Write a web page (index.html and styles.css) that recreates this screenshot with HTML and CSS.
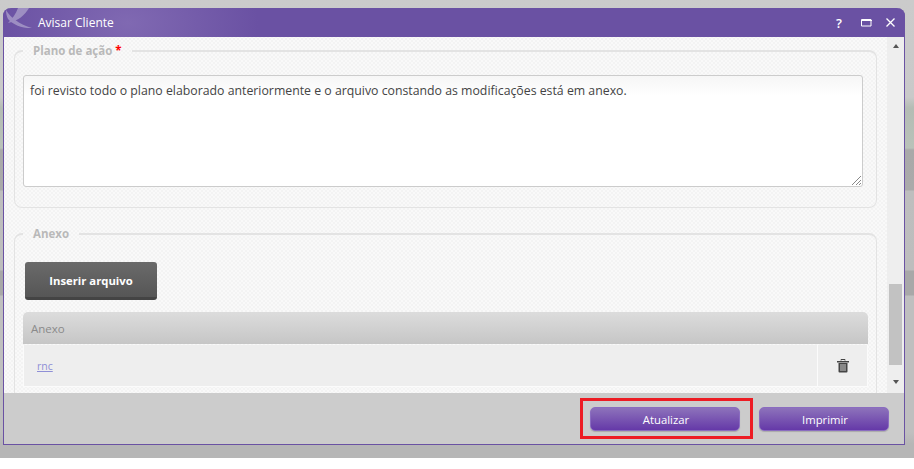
FILE: index.html
```html
<!DOCTYPE html>
<html>
<head>
<meta name="viewport" content="width=device-width, initial-scale=1">
<link rel="stylesheet" href="styles.css">
</head>
<body>
<div class="backdrop">
  <div class="dialog">
    <div class="titlebar">
      <svg class="logo" width="32" height="22" viewBox="0 0 32 22"><path d="M3 2C8 10 16 16 29 20C20 20.500 10 17 5 11C3.500 8 3 5 3 2Z M26 0C22 7 15 13 5 15C9 11 13 6 15 0Z" fill="#9d8ec2"/></svg>
      <span class="title">Avisar Cliente</span>
      <span class="winbtns">
        <span class="help">?</span>
        <svg class="maxbtn" width="11" height="8" viewBox="0 0 11 8"><path d="M.5.5h9.500v6.500H.5z M0 1.500h11" fill="none" stroke="#fff"/></svg>
        <svg width="9" height="9" viewBox="0 0 9 9"><path d="M.5.5l8 8M8.500.5l-8 8" fill="none" stroke="#fff" stroke-width="1.300"/></svg>
      </span>
    </div>
    <div class="content">
      <div class="scrollarea">
        <fieldset class="group first">
          <legend>Plano de ação <span class="req">*</span></legend>
          <div class="notes">foi revisto todo o plano elaborado anteriormente e o arquivo constando as modificações está em anexo.
            <svg class="grip" width="9" height="9" viewBox="0 0 9 9"><path d="M0 9L9 0M4 9L9 4M7 9L9 7" stroke="#888" fill="none"/></svg>
          </div>
        </fieldset>
        <fieldset class="group second">
          <legend>Anexo</legend>
          <button class="insert">Inserir arquivo</button>
          <div class="table">
            <div class="thead">Anexo</div>
            <div class="trow">
              <div class="tname"><a href="#">rnc</a></div>
              <div class="tact">
                <svg width="12" height="14" viewBox="0 0 12 14"><path d="M4 1.500V.5h4v1" fill="none" stroke="#444"/><path d="M0 2h12v1.500H0z" fill="#444"/><path d="M1.500 4h9v8.500q0 1-1 1h-7q-1 0-1-1z" fill="#444"/><path d="M4 5v7M6 5v7M8 5v7" stroke="#ccc"/></svg>
              </div>
            </div>
          </div>
        </fieldset>
      </div>
      <div class="scrollbar">
        <span class="up"></span>
        <span class="thumb"></span>
        <span class="down"></span>
      </div>
    </div>
    <div class="footer">
      <button class="action update">Atualizar</button>
      <button class="action print">Imprimir</button>
    </div>
  </div>
  <div class="highlight"></div>
</div>
</body>
</html>
```

FILE: styles.css
```css
* {box-sizing: border-box}

html, body {
  margin: 0;
  background: #fff;
  font-family: "Open Sans", sans-serif;
}

/* the dimmed page behind the dialog only shows as strips at the sides */
.backdrop {
  position: relative;
  height: 458px;
  padding: 8px 9px 14px 3px;
  background: linear-gradient(#cbcbcb 0, #c9c9c9 97px, #b4bcb4 108px, #b9c2b9 148px, #a9a9a9 150px, #aaa 190px, #bebebe 191px, #bdbdbd 270px, #a8a8a8 271px, #a8a8a8 295px, #bfbfbf 296px, #bfbfbf 432px, #b6b6b6 444px);
  overflow: hidden;
}

/* dialog */
.dialog {
  display: flex;
  flex-direction: column;
  height: 437px;
  border: 1px solid #6a52a3;
  border-top: none;
  border-radius: 8px 8px 0 0;
}

.titlebar {
  display: flex;
  align-items: center;
  flex: none;
  position: relative;
  height: 29px;
  margin: 0 -1px;
  padding: 0 10px 0 35px;
  border-radius: 8px 8px 0 0;
  background: radial-gradient(ellipse 130px 80px at 125px 15px, #8069b2, #6a51a3);
  color: #fff;
  font-size: 12px;
  overflow: hidden;
}

.logo {
  position: absolute;
  left: 0;
  top: 0;
}

.winbtns {
  display: flex;
  align-items: center;
  gap: 14px;
  margin-left: auto;
}

.help {
  margin-right: 5px;
  font-size: 13px;
  font-weight: 600;
}

.content {
  display: flex;
  flex: none;
  height: 356px;
  overflow: hidden;
}

.scrollarea {
  flex: 1;
  padding: 6px 10px 0 10px;
  background-color: #f9f9f9;
  background-image: radial-gradient(#f3f3f3 1px, transparent 1px), radial-gradient(#f3f3f3 1px, transparent 1px);
  background-size: 4px 4px;
  background-position: 0 0, 2px 2px;
  overflow: hidden;
}

/* fieldsets */
.group {
  margin: 0;
  padding: 0 8px;
  border: 1px solid #e3e3e3;
  border-width: 2px 1px 1px 1px;
  border-radius: 8px;
}

.group.first {
  height: 165px;
  margin-bottom: 18px;
}

.group.second {
  padding-bottom: 40px;
}

.group legend {
  padding: 0 10px;
  font-size: 11.500px;
  font-weight: 700;
  line-height: 16px;
  color: #b9b9b9;
}

.req {
  color: #f00;
}

.notes {
  position: relative;
  width: 840px;
  height: 112px;
  margin-top: 16px;
  padding: 6px 6px;
  border: 1px solid #ccc;
  border-radius: 3px;
  background: linear-gradient(#f6f6f6, #fff 20px);
  color: #444;
  font-size: 12.300px;
  line-height: 18px;
}

.grip {
  position: absolute;
  right: 1px;
  bottom: 1px;
}

.insert {
  display: block;
  width: 132px;
  height: 38px;
  margin: 20px 0 12px 2px;
  padding: 1px 6px 0;
  border: none;
  border-bottom: 3px solid #444;
  border-radius: 3px;
  background: linear-gradient(#6a6a6a, #565656);
  color: #fff;
  font-family: inherit;
  font-size: 11.300px;
  font-weight: 700;
}

.table {
  width: 845px;
  font-size: 11.500px;
}

.thead {
  height: 32px;
  padding: 0 8px;
  border-radius: 5px 5px 0 0;
  background: linear-gradient(#dcdcdc, #c6c6c6);
  color: #8a8a8a;
  line-height: 33px;
}

.trow {
  display: flex;
  height: 42px;
  margin-top: 1px;
  border: 1px solid #fbfbfb;
  border-top: none;
  background: #eee;
}

.tname {
  flex: 1;
  padding-left: 13px;
  font-size: 10.500px;
  line-height: 42px;
}

.tname a {
  color: #8f8fd6;
}

.tact {
  display: flex;
  align-items: center;
  justify-content: center;
  width: 50px;
  border-left: 1px solid #fbfbfb;
}

/* scrollbar */
.scrollbar {
  display: flex;
  flex-direction: column;
  align-items: center;
  flex: none;
  width: 17px;
  background: #eee;
}

.up, .down {
  width: 0;
  height: 0;
  border: 4px solid transparent;
  border-left-width: 3.500px;
  border-right-width: 3.500px;
}

.up {
  margin-top: 7px;
  border-top: none;
  border-bottom-color: #555;
}

.thumb {
  width: 13px;
  height: 81px;
  margin-top: 236px;
  background: #c2c2c2;
}

.down {
  margin-top: 15px;
  border-bottom: none;
  border-top-color: #555;
}

/* footer */
.footer {
  display: flex;
  flex: 1;
  justify-content: flex-end;
  gap: 19px;
  padding: 14px 15px 0 0;
  background: #ccc;
}

.action {
  height: 24px;
  padding: 0 0 0 2px;
  border: 1px solid #8a6cc0;
  border-radius: 5px;
  background: linear-gradient(#8d72bb, #6539a8);
  box-shadow: 0 1px 1px #aaa;
  color: #fff;
  font-family: inherit;
  font-size: 11.300px;
}

.update {
  width: 150px;
}

.print {
  width: 130px;
}

.highlight {
  position: absolute;
  left: 580px;
  top: 398px;
  width: 173px;
  height: 41px;
  border: 3px solid #ed1c24;
}
```
